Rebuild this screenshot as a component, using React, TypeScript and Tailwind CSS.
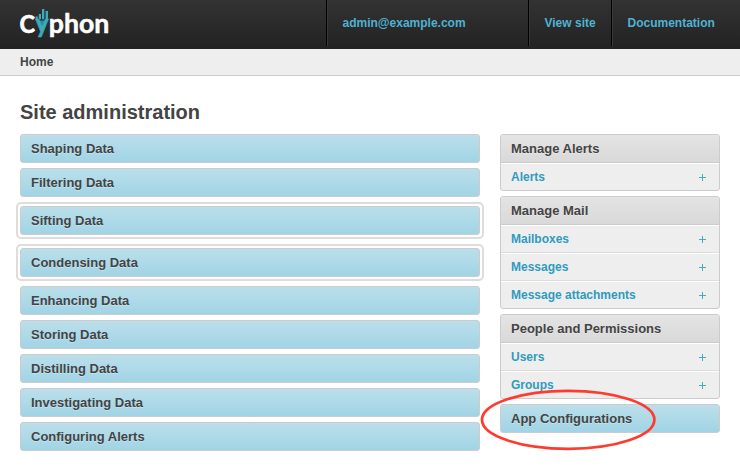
const leftItems = [
  { label: 'Shaping Data' },
  { label: 'Filtering Data' },
  { label: 'Sifting Data', ringed: true },
  { label: 'Condensing Data', ringed: true },
  { label: 'Enhancing Data' },
  { label: 'Storing Data' },
  { label: 'Distilling Data' },
  { label: 'Investigating Data' },
  { label: 'Configuring Alerts' },
];

const groups = [
  { title: 'Manage Alerts', rows: ['Alerts'] },
  { title: 'Manage Mail', rows: ['Mailboxes', 'Messages', 'Message attachments'] },
  { title: 'People and Permissions', rows: ['Users', 'Groups'] },
];

function Logo() {
  return (
    <svg width="96" height="46" viewBox="0 0 96 46" className="block overflow-visible" fontFamily="Lato, sans-serif" fontWeight="700">
      <text x="-0.6" y="33" fill="#fff" stroke="#fff" strokeWidth=".6" fontSize="25" textLength="15.5" lengthAdjust="spacingAndGlyphs">C</text>
      <path d="M17.5 20.5H26.5L22 31Z" fill="#2b8c9a" />
      <text x="15.5" y="33" fill="#3aabbd" stroke="#3aabbd" strokeWidth=".6" fontSize="26" textLength="13" lengthAdjust="spacingAndGlyphs">y</text>
      <path d="M15.6 16.5h2.2v2.8h-2.2zM18.8 14H21v5.3h-2.2zM22 9h2.3v10.3H22zM25.6 11H28v8.3h-2.4z" fill="#3aabbd" />
      <text x="28.8" y="33" fill="#fff" stroke="#fff" strokeWidth=".5" fontSize="26" textLength="60.6" lengthAdjust="spacingAndGlyphs">phon</text>
    </svg>
  );
}

function BlueBar({ label, ringed = false }: { label: string; ringed?: boolean }) {
  const bar = (
    <div className="flex h-[29px] items-center rounded-[3px] border border-[#ccc] bg-linear-to-b from-[#bbdfeb] to-[#a1d4e5] px-[10px] text-[13px] font-bold text-[#444] [text-shadow:0_1px_0_rgba(255,255,255,0.3)]">
      {label}
    </div>
  );
  return ringed ? (
    <div className="-mx-1 rounded-[5px] border-2 border-[#ddd] p-[2px]">{bar}</div>
  ) : bar;
}

function Plus() {
  return (
    <svg width="7" height="7" viewBox="0 0 7 7" className="mr-[13px] mt-px">
      <path d="M3 0h1v7H3zM0 3h7v1H0z" fill="#45abc5" />
    </svg>
  );
}

export default function App() {
  return (
    <div className="relative h-[471px] w-[740px] overflow-hidden bg-white font-['Liberation_Sans',Arial,sans-serif] text-[#444]">
      <header className="flex h-[49px] bg-linear-to-b from-[#333] to-[#222] text-[12px] font-bold text-[#4fb2d3]">
        <div className="w-[326px] pl-5"><Logo /></div>
        <nav className="flex h-[46px]">
          <a className="flex w-[202px] items-center border-l border-black pl-[15.5px] shadow-[inset_1px_0_0_#383838]"><span>admin@example.com</span></a>
          <a className="flex w-[83px] items-center border-l border-black pl-[15.5px] shadow-[inset_1px_0_0_#383838]"><span>View site</span></a>
          <a className="flex w-[129px] items-center border-l border-black pl-[15.5px] shadow-[inset_1px_0_0_#383838]"><span>Documentation</span></a>
        </nav>
      </header>
      <div className="flex h-[27px] items-center border-b border-[#ccc] bg-[#eee] px-5 text-[12px] font-bold">Home</div>
      <main className="px-5 pt-[24px]">
        <h1 className="h-[34px] text-[20px] leading-6 font-bold">Site administration</h1>
        <div className="flex items-start gap-5">
          <div className="flex w-[460px] flex-col gap-[5px]">
            {leftItems.map((item) => <BlueBar key={item.label} {...item} />)}
          </div>
          <div className="flex w-[220px] flex-col gap-[5px]">
            {groups.map((g) => (
              <section key={g.title} className="overflow-hidden rounded-[3px] border border-[#ccc] bg-[#eee] font-bold">
                <h2 className="flex h-[28px] items-center border-b border-[#ccc] bg-linear-to-b from-[#e4e4e4] to-[#d9d9d9] pl-[10px] text-[13px] [text-shadow:0_1px_0_rgba(255,255,255,0.3)]">{g.title}</h2>
                {g.rows.map((r) => (
                  <div key={r} className="flex h-7 items-center justify-between border-t border-b border-t-white border-b-[#ddd] pl-[10px] text-[12px] text-[#309bbf] last:h-[27px] last:border-b-0">
                    <span>{r}</span><Plus />
                  </div>
                ))}
              </section>
            ))}
            <BlueBar label="App Configurations" />
          </div>
        </div>
      </main>
      <svg className="pointer-events-none absolute top-[386px] left-[478px]" width="180" height="68" viewBox="0 0 180 68">
        <ellipse cx="90.2" cy="33.8" rx="86.2" ry="29" fill="none" stroke="#ff3b2f" strokeWidth="2.7" />
      </svg>
    </div>
  );
}
